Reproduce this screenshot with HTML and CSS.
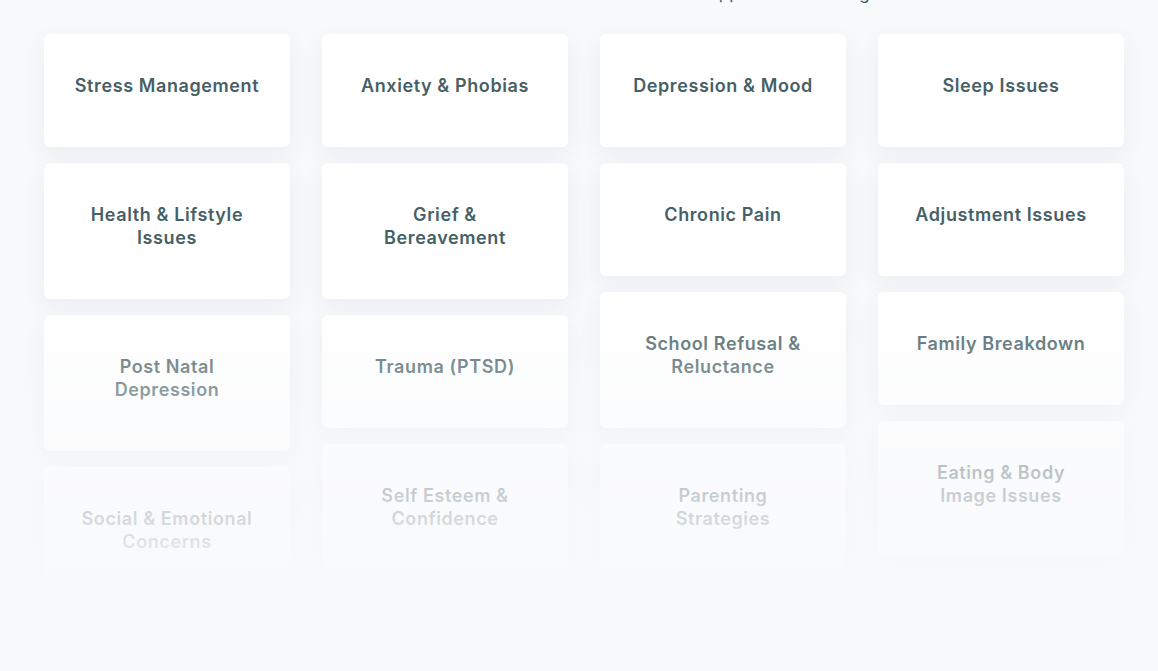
FILE: index.html
```html
<!DOCTYPE html>
<html lang="en">

<head>
  <meta charset="UTF-8">
  <meta name="viewport" content="width=device-width, initial-scale=1.0">
  <title>Areas of Support</title>
  <link rel="stylesheet" href="styles.css">
</head>

<body>
  <section class="support">
    <p class="support-intro">Here we support the following</p>

    <div class="support-grid">
      <div class="support-col">
        <div class="topic-card"><h3>Stress Management</h3></div>
        <div class="topic-card"><h3>Health &amp; Lifstyle<br>Issues</h3></div>
        <div class="topic-card"><h3>Post Natal<br>Depression</h3></div>
        <div class="topic-card"><h3>Social &amp; Emotional<br>Concerns</h3></div>
      </div>
      <div class="support-col">
        <div class="topic-card"><h3>Anxiety &amp; Phobias</h3></div>
        <div class="topic-card"><h3>Grief &amp;<br>Bereavement</h3></div>
        <div class="topic-card"><h3>Trauma (PTSD)</h3></div>
        <div class="topic-card"><h3>Self Esteem &amp;<br>Confidence</h3></div>
      </div>
      <div class="support-col">
        <div class="topic-card"><h3>Depression &amp; Mood</h3></div>
        <div class="topic-card"><h3>Chronic Pain</h3></div>
        <div class="topic-card"><h3>School Refusal &amp;<br>Reluctance</h3></div>
        <div class="topic-card"><h3>Parenting<br>Strategies</h3></div>
      </div>
      <div class="support-col">
        <div class="topic-card"><h3>Sleep Issues</h3></div>
        <div class="topic-card"><h3>Adjustment Issues</h3></div>
        <div class="topic-card"><h3>Family Breakdown</h3></div>
        <div class="topic-card"><h3>Eating &amp; Body<br>Image Issues</h3></div>
      </div>

      <div class="support-fade"></div>
    </div>
  </section>
</body>

</html>
```

FILE: styles.css
```css
body {
  margin: 0;
  font-family: Inter, "Open Sans", sans-serif;
  background-color: #f8f9fb;
  overflow: hidden;
}

.support {
  padding: 0 34px 0 44px;
}

.support-intro {
  margin: -16px 0 0;
  height: 18px;
  font-size: 17px;
  line-height: 18px;
  color: #4a5f65;
  text-align: center;
  padding-left: 330px;
}

.support-grid {
  position: relative;
  display: flex;
  gap: 32px;
  margin-top: 32px;
  height: 640px;
}

.support-col {
  flex: 1;
  display: flex;
  flex-direction: column;
  gap: 16px;
}

.topic-card {
  background: #ffffff;
  border-radius: 6px;
  padding: 40px 12px 50px;
  box-shadow: 0 8px 24px rgba(30, 40, 60, 0.06);
  text-align: center;
}

.topic-card h3 {
  margin: 0;
  font-size: 18px;
  line-height: 23px;
  font-weight: 600;
  color: #475f66;
  letter-spacing: 0.6px;
}

.support-fade {
  position: absolute;
  left: -44px;
  right: -34px;
  top: 256px;
  bottom: 0;
  background: linear-gradient(to bottom,
      rgba(248, 249, 251, 0) 0px,
      rgba(248, 249, 251, 0.5) 130px,
      rgba(248, 249, 251, 0.82) 240px,
      #f8f9fb 305px);
  pointer-events: none;
}
```
